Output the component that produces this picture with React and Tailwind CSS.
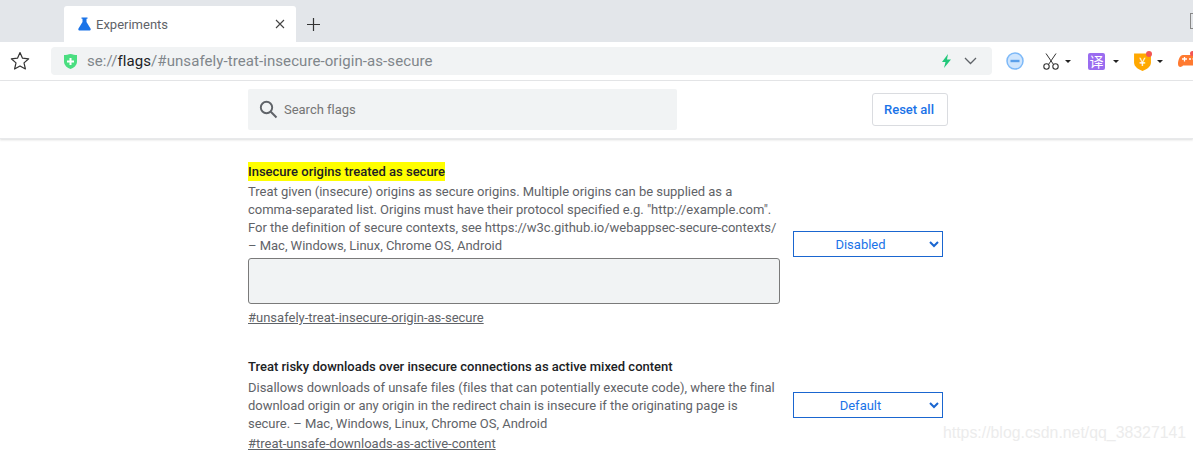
import React from 'react';

const FONT = { fontFamily: 'Roboto, "Liberation Sans", sans-serif' };

function FlaskIcon() {
  return (
    <svg width="13" height="14" viewBox="0 0 13 14">
      <path d="M3.5 0.5h6v1.2h-1v3.3l4 6.6c.6 1-.1 2-1.2 2H1.700c-1.100 0-1.800-1-1.200-2l4-6.600V1.700h-1z" fill="#1a73e8" />
    </svg>
  );
}

function ShieldIcon() {
  return (
    <svg width="15" height="17" viewBox="0 0 15 16">
      <path d="M1 1.500C3 1.500 5.500 1 7.500 .5 9.500 1 12 1.500 14 1.500V8c0 4-3.500 6.500-6.500 7.500C4.500 14.500 1 12 1 8z" fill="#4ade80" />
      <path d="M6.500 4.500h2v2.500H11v2H8.500v2.500h-2V9H4V7h2.500z" fill="#fff" />
    </svg>
  );
}

function ToolbarArrow({ className }) {
  return <div className={`${className} mt-[1px] w-0 h-0 border-x-[3px] border-x-transparent border-t-[3px] border-t-[#222]`} />;
}

function Toolbar() {
  return (
    <div className="h-[39px] bg-white border-b border-[#e6e7e9] flex items-center shrink-0 overflow-hidden">
      <svg className="ml-[10px] mr-[21px] shrink-0" width="20" height="20" viewBox="0 0 20 20">
        <path d="M10 1.500l2.500 5.700 6.200.600-4.700 4.100 1.400 6.100L10 14.900l-5.400 3.100L6 11.900 1.300 7.800l6.200-.600z" fill="none" stroke="#333" strokeWidth="1.200" strokeLinejoin="round" />
      </svg>
      <div className="w-[941px] h-[28px] rounded-[4px] bg-[#f1f3f4] flex items-center pl-[12px] shrink-0">
        <ShieldIcon />
        <div className="ml-[9px] text-[15px] text-[#80868b] whitespace-nowrap tracking-[0.08px]">
          se://<span className="text-[#202124]">flags</span>/#unsafely-treat-insecure-origin-as-secure
        </div>
        <svg className="ml-auto" width="11" height="14" viewBox="0 0 11 14">
          <path d="M7 0L1 8h3.500L3 14l7-8.500H6z" fill="#22c77a" />
        </svg>
        <svg className="ml-[12px] mr-[15px]" width="13" height="8" viewBox="0 0 13 8">
          <path d="M1 1l5.500 5.500L12 1" fill="none" stroke="#5f6368" strokeWidth="1.300" />
        </svg>
      </div>
      <svg className="ml-[14px] shrink-0" width="18" height="18" viewBox="0 0 18 18">
        <circle cx="9" cy="9" r="8" fill="#cfe5fd" stroke="#7db9f8" strokeWidth="1.500" />
        <rect x="4.500" y="7.800" width="9" height="2.400" fill="#5a9fea" />
      </svg>
      <svg className="ml-[19px] shrink-0" width="16" height="17" viewBox="0 0 16 17">
        <path d="M3 .5l7.500 11M13 .5L5.500 11.500" fill="none" stroke="#333" strokeWidth="1" />
        <circle cx="3.500" cy="13.500" r="2.700" fill="none" stroke="#333" strokeWidth="1.100" />
        <circle cx="12.500" cy="13.500" r="2.700" fill="none" stroke="#333" strokeWidth="1.100" />
      </svg>
      <ToolbarArrow className="ml-[6px]" />
      <div className="ml-[17px] w-[17px] h-[17px] rounded-[2px] bg-[#9a6cf0] text-white text-[14px] leading-[17px] text-center shrink-0" style={{ fontFamily: '"Noto Sans CJK SC", sans-serif' }}>译</div>
      <ToolbarArrow className="ml-[8px]" />
      <div className="ml-[15px] relative shrink-0 w-[17px] h-[19px]">
        <svg width="17" height="19" viewBox="0 0 16 18">
          <path d="M0 1.500h16V10c0 4-4 6.500-8 8-4-1.500-8-4-8-8z" fill="#ffa800" />
        </svg>
        <span className="absolute inset-0 text-white text-[12px] leading-[18px] text-center" style={{ fontFamily: '"Noto Sans CJK SC", sans-serif' }}>¥</span>
        <div className="absolute -top-[1px] -right-[1px] w-[6px] h-[6px] rounded-full bg-[#f25555]" />
      </div>
      <ToolbarArrow className="ml-[6px]" />
      <div className="ml-[15px] relative shrink-0 w-[20px] h-[15px]">
        <svg width="20" height="15" viewBox="0 0 20 15">
          <path d="M5 1h10c3 0 5 5 5 9 0 3-3 4-5 1.500H5C3 14 0 13 0 10c0-4 2-9 5-9z" fill="#ff7a30" />
          <path d="M4 5h5M6.500 3v4.500" stroke="#fff" strokeWidth="1.300" />
          <circle cx="12" cy="5" r="1" fill="#fff" />
          <circle cx="15.500" cy="5" r="1" fill="#fff" />
        </svg>
        <div className="absolute -top-[3px] right-[3px] w-[5px] h-[5px] rounded-full bg-[#f25555]" />
      </div>
    </div>
  );
}

function FlagSelect({ value, raised }) {
  return (
    <div className={`relative w-[150px] h-[26px] border border-[#1a66d0] bg-white shrink-0 ml-[13px] mr-[5px] flex items-center justify-center text-[13px] text-[#1a73e8] ${raised ? 'mb-[2px]' : ''}`}>
      <span className="pr-[15px] pt-[1px] leading-[19px]">{value}</span>
      <svg className="absolute right-[3px] top-[9px]" width="10" height="7" viewBox="0 0 10 7">
        <path d="M1 1l4 4 4-4" fill="none" stroke="#1a66d0" strokeWidth="2" />
      </svg>
    </div>
  );
}

function Experiment({ title, highlight, children, link, select, input }) {
  return (
    <div className="flex items-center">
      <div className="w-[532px] shrink-0 text-[13px] leading-[18px] text-[#5f6368]">
        <div className="h-[19px] leading-[19px] font-medium text-[#202124]">
          <span className={highlight ? 'bg-[#ffff00] inline-block h-[19px]' : 'inline-block h-[19px]'}>{title}</span>
        </div>
        <p className={input ? 'mt-[2px] tracking-[-0.02px]' : 'mt-[3px] tracking-[-0.02px]'}>{children}</p>
        {input && <div className="mt-[3px] h-[46px] rounded-[3px] border border-[#7a7a7a] bg-[#f1f3f4]" />}
        <a className={input ? 'block mt-[5px] underline' : 'block mt-[2px] underline'}>{link}</a>
      </div>
      <FlagSelect value={select} raised={input} />
    </div>
  );
}

export default function App() {
  return (
    <div className="relative w-[1193px] h-[451px] overflow-hidden bg-white flex flex-col" style={FONT}>
      {/* tab strip */}
      <div className="h-[42px] bg-[#e3e6ea] flex items-end shrink-0 relative">
        <div className="ml-[64px] w-[232px] h-[36px] bg-white rounded-t-[3px] flex items-center pl-[14px] pr-[11px]">
          <FlaskIcon />
          <span className="ml-[5px] pt-[2px] text-[13px] text-[#5f6368]">Experiments</span>
          <svg className="ml-auto" width="10" height="10" viewBox="0 0 10 10">
            <path d="M1 1l8 8M9 1l-8 8" stroke="#444" strokeWidth="1.100" />
          </svg>
        </div>
        <svg className="ml-[11px] mb-[11px]" width="13" height="13" viewBox="0 0 13 13">
          <path d="M6.500 0v13M0 6.500h13" stroke="#333" strokeWidth="1.200" />
        </svg>
        <div className="absolute right-0 top-[13px] w-[3px] h-[16px] border border-r-0 border-[#888]" />
      </div>

      <Toolbar />

      {/* search header */}
      <div className="h-[58px] bg-white shadow-[0_1px_2px_rgba(60,64,67,0.18)] border-b border-[#e8e9eb] shrink-0 flex items-center pl-[248px]">
        <div className="w-[429px] h-[41px] bg-[#f1f3f4] rounded-[2px] flex items-center pl-[11px]">
          <svg width="19" height="19" viewBox="0 0 19 19">
            <circle cx="7.500" cy="7.500" r="5.700" fill="none" stroke="#5f6368" strokeWidth="1.900" />
            <path d="M11.800 11.800L17.500 17.500" stroke="#5f6368" strokeWidth="2" />
          </svg>
          <span className="ml-[6px] text-[13px] text-[#757575] tracking-[-0.02px]">Search flags</span>
        </div>
        <button className="ml-[195px] w-[76px] h-[33px] pr-[2px] rounded-[3px] border border-[#dadce0] bg-white text-[13px] font-medium text-[#1a73e8]">
          Reset all
        </button>
      </div>

      {/* experiments */}
      <div className="pt-[23px] pl-[248px] w-[948px] flex flex-col gap-[30px]">
        <Experiment title="Insecure origins treated as secure" highlight input select="Disabled" link="#unsafely-treat-insecure-origin-as-secure">
          Treat given (insecure) origins as secure origins. Multiple origins can be supplied as a comma-separated list. Origins must have their protocol specified e.g. "http://example.com". For the definition of secure contexts, see https://w3c.github.io/webappsec-secure-contexts/<br />– Mac, Windows, Linux, Chrome OS, Android
        </Experiment>
        <Experiment title="Treat risky downloads over insecure connections as active mixed content" select="Default" link="#treat-unsafe-downloads-as-active-content">
          Disallows downloads of unsafe files (files that can potentially execute code), where the final download origin or any origin in the redirect chain is insecure if the originating page is secure. – Mac, Windows, Linux, Chrome OS, Android
        </Experiment>
      </div>

      {/* csdn watermark */}
      <div className="absolute left-[943px] top-[423px] text-[15.85px] leading-[20px] text-[#ececec] whitespace-nowrap" style={{ fontFamily: '"Liberation Sans", sans-serif' }}>
        https://blog.csdn.net/qq_38327141
      </div>
    </div>
  );
}
